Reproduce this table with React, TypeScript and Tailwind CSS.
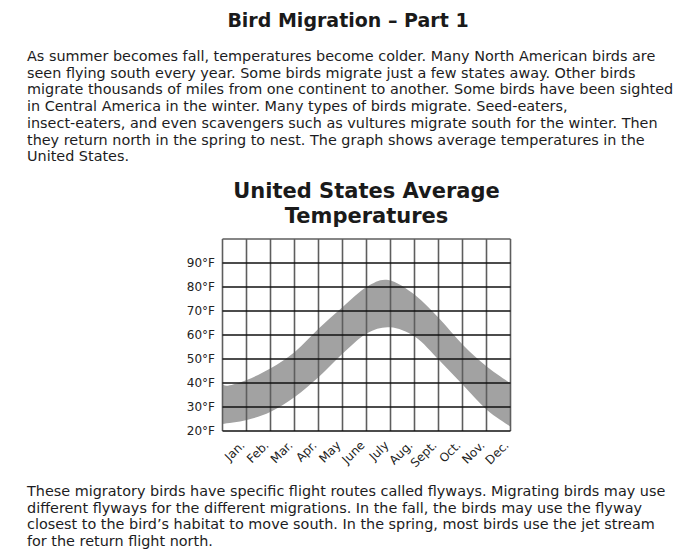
const MONTHS = ["Jan.", "Feb.", "Mar.", "Apr.", "May", "June", "July", "Aug.", "Sept.", "Oct.", "Nov.", "Dec."];
const TEMPS = [90, 80, 70, 60, 50, 40, 30, 20];

const INTRO = [
  "As summer becomes fall, temperatures become colder. Many North American birds are",
  "seen flying south every year. Some birds migrate just a few states away. Other birds",
  "migrate thousands of miles from one continent to another. Some birds have been sighted",
  "in Central America in the winter. Many types of birds migrate. Seed-eaters,",
  "insect-eaters, and even scavengers such as vultures migrate south for the winter. Then",
  "they return north in the spring to nest. The graph shows average temperatures in the",
  "United States.",
];

const FLYWAYS = [
  "These migratory birds have specific flight routes called flyways. Migrating birds may use",
  "different flyways for the different migrations. In the fall, the birds may use the flyway",
  "closest to the bird’s habitat to move south. In the spring, most birds use the jet stream",
  "for the return flight north.",
];

const X0 = 222.5;
const Y0 = 239;
const CELL = 24;

// traced edges of the shaded band, in page px
const UPPER: [number, number][] = [
  [222.5, 384.3], [228, 385.7], [246.7, 380], [270.7, 368.3], [295, 351.7], [319, 328.3],
  [343, 306.7], [367, 286.7], [388.3, 280], [415, 295], [439, 318.3], [463, 345], [487, 366.7], [510.5, 383.3],
];
const LOWER: [number, number][] = [
  [222.5, 424], [246.7, 420], [270.7, 411.7], [295, 396.7], [319, 376.7], [343, 353.3], [367, 333.3],
  [390, 327.3], [415, 336.7], [439, 360], [463, 385], [487, 410], [510.5, 426.7],
];

function smooth(pts: [number, number][], moveFirst: boolean) {
  let d = moveFirst ? `M${pts[0][0]},${pts[0][1]}` : `L${pts[0][0]},${pts[0][1]}`;
  for (let i = 0; i < pts.length - 1; i++) {
    const p0 = pts[i - 1] ?? pts[i];
    const p1 = pts[i];
    const p2 = pts[i + 1];
    const p3 = pts[i + 2] ?? p2;
    const c1x = p1[0] + (p2[0] - p0[0]) / 6;
    const c1y = p1[1] + (p2[1] - p0[1]) / 6;
    const c2x = p2[0] - (p3[0] - p1[0]) / 6;
    const c2y = p2[1] - (p3[1] - p1[1]) / 6;
    d += ` C${c1x.toFixed(1)},${c1y.toFixed(1)} ${c2x.toFixed(1)},${c2y.toFixed(1)} ${p2[0]},${p2[1]}`;
  }
  return d;
}

function TempChart() {
  const band = smooth(UPPER, true) + " " + smooth([...LOWER].reverse(), false) + " Z";
  return (
    <svg width={377} height={245} viewBox="178 232 377 245" className="block">
      <path d={band} fill="#a2a2a2" />
      {Array.from({ length: 13 }, (_, i) => (
        <line
          key={`v${i}`}
          x1={X0 + i * CELL}
          x2={X0 + i * CELL}
          y1={Y0}
          y2={Y0 + 8 * CELL}
          stroke="#5e5e5e"
          strokeWidth={1.6}
        />
      ))}
      {Array.from({ length: 9 }, (_, j) => (
        <line
          key={`h${j}`}
          x1={X0}
          x2={X0 + 12 * CELL}
          y1={Y0 + j * CELL}
          y2={Y0 + j * CELL}
          stroke={j === 0 ? "#5e5e5e" : "#111"}
          strokeWidth={1.4}
        />
      ))}
      {TEMPS.map((t, j) => (
        <text
          key={t}
          x={215}
          y={Y0 + (j + 1) * CELL + 4.3}
          textAnchor="end"
          fontSize={12}
          fill="#222"
          fontFamily="'DejaVu Sans', sans-serif"
        >
          {t}°F
        </text>
      ))}
      {MONTHS.map((m, i) => {
        const x = X0 + (i + 1) * CELL - 1;
        const y = 446;
        return (
          <text
            key={m}
            x={x}
            y={y}
            textAnchor="end"
            fontSize={12}
            fill="#222"
            fontFamily="'DejaVu Sans', sans-serif"
            transform={`rotate(-45 ${x} ${y})`}
          >
            {m}
          </text>
        );
      })}
    </svg>
  );
}

function Lines({ lines, className }: { lines: string[]; className?: string }) {
  return (
    <p className={className}>
      {lines.map((l) => (
        <span key={l} className="block whitespace-nowrap">
          {l}
        </span>
      ))}
    </p>
  );
}

export default function App() {
  return (
    <div className="w-[696px] bg-white pl-[27px] pr-[8px] pt-[8px] font-['DejaVu_Sans',sans-serif] text-[#1c1c22]">
      <h1 className="pr-[19px] text-center text-[19px] font-bold leading-[24px] text-[#1a1a1a]">Bird Migration – Part 1</h1>

      <Lines lines={INTRO} className="mt-[16px] text-[14.4px] leading-[16.7px]" />

      <div className="-ml-[27px] mt-[14px] pl-[178px]">
        <div className="w-[377px]">
          <h2 className="text-center text-[21px] font-bold leading-[25px] text-[#1a1a1a]">
            United States Average
            <br />
            Temperatures
          </h2>
          <div className="mt-[3px]">
            <TempChart />
          </div>
        </div>
      </div>

      <Lines lines={FLYWAYS} className="mt-[6px] text-[14.4px] leading-[16.7px]" />
    </div>
  );
}
